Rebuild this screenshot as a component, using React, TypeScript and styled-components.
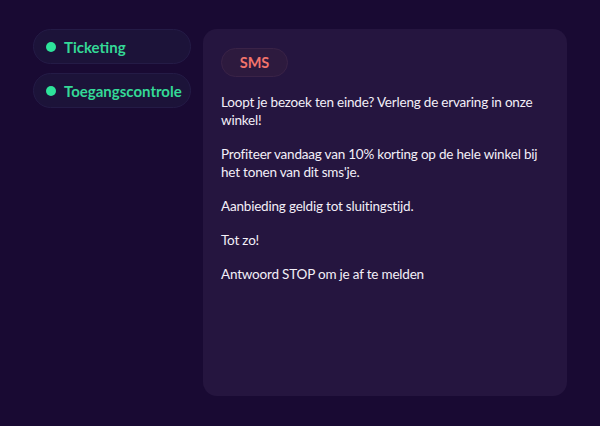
import React from "react";
import styled, { createGlobalStyle } from "styled-components";

const Global = createGlobalStyle`
  html, body { margin: 0; padding: 0; background: #190a33; }
  body { font-family: "Lato", "Noto Sans", sans-serif; }
  * { box-sizing: border-box; }
`;

const Page = styled.div`
  width: 600px;
  height: 426px;
  display: flex;
  align-items: flex-start;
  gap: 12px;
  padding: 29px 33px 30px 33px;
  background: #190a33;
`;

const Sidebar = styled.nav`
  display: flex;
  flex-direction: column;
  gap: 9px;
  width: 158px;
  flex-shrink: 0;
`;

const NavPill = styled.div`
  display: flex;
  align-items: center;
  gap: 8px;
  height: 35px;
  padding: 0 12px;
  border-radius: 18px;
  background: #1c1339;
  border: 1px solid #241b46;
  color: #34d997;
  font-weight: 700;
  font-size: 15px;
`;

const Dot = styled.span`
  width: 10px;
  height: 10px;
  border-radius: 50%;
  background: #2ee39b;
  flex-shrink: 0;
`;

const Panel = styled.section`
  flex: 1;
  height: 367px;
  padding: 19px 18px;
  border-radius: 14px;
  background: #25153f;
  color: #f3eff8;
  font-size: 13.5px;
  letter-spacing: -0.2px;
  line-height: 18px;
`;

const Badge = styled.div`
  display: inline-flex;
  align-items: center;
  justify-content: center;
  width: 67px;
  height: 29px;
  border-radius: 15px;
  background: #2d1a3e;
  border: 1px solid #3a2347;
  color: #f2736b;
  font-weight: 700;
  font-size: 14.5px;
  letter-spacing: 0;
  margin-bottom: 16px;
`;

const Para = styled.p`
  margin: 0 0 16px 0;
`;

export default function App() {
  return (
    <>
      <Global />
      <Page>
        <Sidebar>
          <NavPill>
            <Dot />
            Ticketing
          </NavPill>
          <NavPill>
            <Dot />
            Toegangscontrole
          </NavPill>
        </Sidebar>
        <Panel>
          <Badge>SMS</Badge>
          <Para>Loopt je bezoek ten einde? Verleng de ervaring in onze winkel!</Para>
          <Para>Profiteer vandaag van 10% korting op de hele winkel bij het tonen van dit sms'je.</Para>
          <Para>Aanbieding geldig tot sluitingstijd.</Para>
          <Para>Tot zo!</Para>
          <Para>Antwoord STOP om je af te melden</Para>
        </Panel>
      </Page>
    </>
  );
}
